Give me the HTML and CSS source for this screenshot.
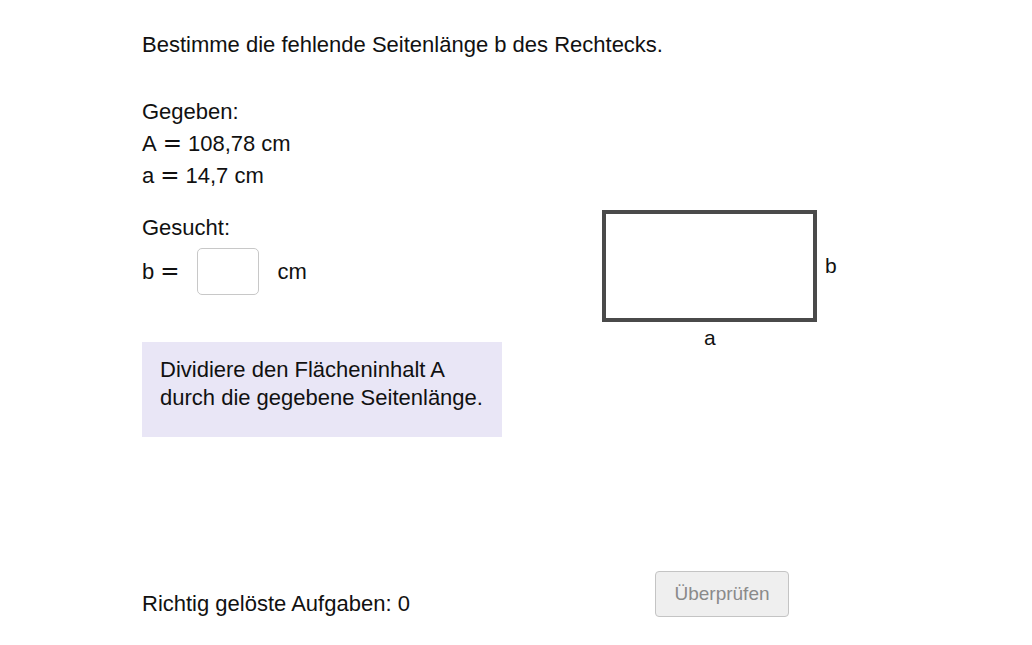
FILE: index.html
```html
<!DOCTYPE html>
<html lang="de">
<head>
	<meta charset="UTF-8">
	<title>Rechteck</title>
	<link rel="stylesheet" href="styles.css">
</head>
<body>
	<div class="page">
		<p class="task">Bestimme die fehlende Seitenlänge b des Rechtecks.</p>
		<div class="work">
			<div class="left">
				<div class="given">
					<p>Gegeben:</p>
					<p>A<span class="eq">=</span>108,78 cm</p>
					<p>a<span class="eq">=</span>14,7 cm</p>
				</div>
				<p class="wanted">Gesucht:</p>
				<div class="answer-row">
					<span>b<span class="eq">=</span></span>
					<input type="text" class="answer" id="answer">
					<span>cm</span>
				</div>
				<div class="hint">Dividiere den Flächeninhalt A durch die gegebene Seitenlänge.</div>
			</div>
			<div class="figure">
				<svg width="250" height="150" viewBox="0 0 250 150">
					<rect x="4" y="7" width="211" height="108" fill="none" stroke="#4a4a4a" stroke-width="4"/>
					<text x="225" y="68" class="label">b</text>
					<text x="104" y="140" class="label">a</text>
				</svg>
			</div>
		</div>
		<div class="footer">
			<p class="score">Richtig gelöste Aufgaben: <span id="score">0</span></p>
			<button class="check-btn" disabled>Überprüfen</button>
		</div>
	</div>
</body>
</html>
```

FILE: styles.css
```css
body {
	margin: 0;
	font-family: "Liberation Sans", Arial, sans-serif;
	font-size: 22px;
	color: #111;
	background: #fff;
}

p {
	margin: 0;
}

.page {
	padding: 30px 0 0 142px;
}

.task {
	line-height: 30px;
}

.eq {
	font-family: "DejaVu Sans", sans-serif;
	font-size: 23px;
	line-height: 1;
	margin: 0 6px;
}

.work {
	display: grid;
	grid-template-columns: 458px 250px;
	margin-top: 36px;
}

.given p {
	line-height: 32px;
}

.wanted {
	margin-top: 20px;
	line-height: 31px;
}

.answer-row {
	display: flex;
	align-items: center;
	margin-top: 5px;
	height: 47px;
}

.answer {
	width: 62px;
	height: 47px;
	box-sizing: border-box;
	border: 1px solid #c8c8c8;
	border-radius: 5px;
	margin: 0 19px 0 11px;
	font-size: 20px;
}

.hint {
	margin-top: 47px;
	width: 360px;
	height: 95px;
	box-sizing: border-box;
	padding: 14px 18px;
	background-color: #e9e6f6;
	line-height: 28px;
}

.figure {
	padding-top: 109px;
}

.figure svg {
	display: block;
}

.label {
	font-family: "Liberation Sans", Arial, sans-serif;
	font-size: 21px;
	fill: #111;
}

.footer {
	display: flex;
	align-items: flex-start;
	margin-top: 134px;
}

.score {
	width: 513px;
	line-height: 30px;
	margin-top: 18px;
}

.check-btn {
	width: 134px;
	height: 46px;
	font-family: "Liberation Sans", Arial, sans-serif;
	font-size: 19px;
	color: #8a8a8a;
	background-color: #efefef;
	border: 1px solid #c4c4c4;
	border-radius: 4px;
}
```
